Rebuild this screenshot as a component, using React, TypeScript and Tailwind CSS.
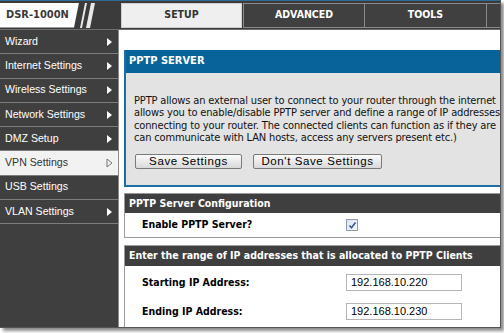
import React from "react";

const tahoma = "font-['DejaVu_Sans_Condensed','DejaVu_Sans',sans-serif]";
const arial = "font-['Liberation_Sans',Arial,sans-serif]";

const menu = [
  "Wizard",
  "Internet Settings",
  "Wireless Settings",
  "Network Settings",
  "DMZ Setup",
  "VPN Settings",
  "USB Settings",
  "VLAN Settings",
];

function Arrow({ active }: { active?: boolean }) {
  if (active) {
    return (
      <svg width="7" height="10" viewBox="0 0 7 10">
        <path d="M1 1 L6 5 L1 9 Z" fill="none" stroke="#777" strokeWidth="1" />
      </svg>
    );
  }
  return (
    <svg width="7" height="10" viewBox="0 0 7 10">
      <path d="M1 1 L6 5 L1 9 Z" fill="#fff" />
    </svg>
  );
}

function Sidebar() {
  return (
    <div className="w-[119px] shrink-0 bg-[#3f3f3f] border-r border-[#8c8c8c] flex flex-col">
      {menu.map((item) => {
        const active = item === "VPN Settings";
        const noArrow = item === "USB Settings";
        return (
          <div
            key={item}
            className={`h-[24.3px] shrink-0 flex items-center justify-between pl-[5px] pr-[5px] border-b border-[#7d7d7d] text-[10.6px] ${arial} ${
              active ? "bg-[#f2f2f2] text-[#333]" : "text-white"
            }`}
          >
            <span>{item}</span>
            {!noArrow && <Arrow active={active} />}
          </div>
        );
      })}
    </div>
  );
}

function TopBar() {
  return (
    <div className="h-[30px] shrink-0 bg-[#3b3b3b] border-t border-[#2d6a96] border-b border-b-[#6e6e6e] flex items-center">
      <div className="w-[121px] shrink-0 flex items-center">
        <div
          className={`w-[79px] h-[25px] bg-white [clip-path:polygon(0_0,79px_0,74px_100%,0_100%)] flex items-center pl-[6px] text-[11px] font-bold text-[#3a3a3a] ${tahoma}`}
        >
          DSR-1000N
        </div>
        <svg width="42" height="25" viewBox="0 0 42 25">
          <path d="M6 0 L8 0 L3 25 L1 25 Z" fill="#e8e8e8" />
          <path d="M12 0 L16 0 L11 25 L7 25 Z" fill="#e8e8e8" />
        </svg>
      </div>
      <div className={`flex text-[10.5px] font-bold ${tahoma}`}>
        <div className="w-[121px] h-[25px] bg-[#efefef] border border-[#cfcfcf] text-[#333] flex items-center justify-center">
          SETUP
        </div>
        <div className="w-[122px] h-[25px] ml-[1px] bg-[#404040] border border-[#8a8a8a] text-white flex items-center justify-center">
          ADVANCED
        </div>
        <div className="w-[122px] h-[25px] bg-[#404040] border border-[#8a8a8a] border-l-0 text-white flex items-center justify-center">
          TOOLS
        </div>
        <div className="w-[40px] h-[25px] bg-[#404040] border border-[#8a8a8a] border-l-0" />
      </div>
    </div>
  );
}

function Button({ label, w }: { label: string; w: string }) {
  return (
    <button
      className={`${w} h-[15px] rounded-[2px] border border-[#7a7a7a] bg-gradient-to-b from-[#fbfbfb] to-[#d9d9d9] text-[11.5px] tracking-[0.6px] text-black leading-none ${arial}`}
    >
      {label}
    </button>
  );
}

function Checkbox() {
  return (
    <span className="w-[12px] h-[12px] border border-[#8b9bb5] bg-gradient-to-br from-[#dfe4ee] to-[#f7f8fb] flex items-center justify-center">
      <svg width="9" height="9" viewBox="0 0 9 9">
        <path d="M1.5 4.5 L3.5 6.8 L7.5 1.5" fill="none" stroke="#3b57a8" strokeWidth="1.6" />
      </svg>
    </span>
  );
}

function Main() {
  return (
    <div className={`flex-1 min-w-0 overflow-hidden bg-white pl-[5px] pt-[20px] ${tahoma}`}>
      <div className="w-[420px] border-2 border-[#1d6ea6] border-t-0">
        <div className="h-[23px] bg-[#08639b] text-white font-bold text-[11px] flex items-center pl-[3px]">
          PPTP SERVER
        </div>
        <div className="bg-[#e3e3e3] h-[112px] pt-[22px] pl-[8px]">
          <div className="text-[11px] tracking-[-0.15px] leading-[12.3px] text-[#111] whitespace-nowrap">
            <div>PPTP allows an external user to connect to your router through the internet</div>
            <div>allows you to enable/disable PPTP server and define a range of IP addresses</div>
            <div>connecting to your router. The connected clients can function as if they are</div>
            <div>can communicate with LAN hosts, access any servers present etc.)</div>
          </div>
          <div className="flex gap-[11px] mt-[10px] ml-[1px]">
            <Button label="Save Settings" w="w-[107px]" />
            <Button label="Don't Save Settings" w="w-[129px]" />
          </div>
        </div>
      </div>

      <div className="w-[420px] mt-[6px] border border-[#9a9a9a]">
        <div className="h-[19px] bg-[#3f3f3f] text-white font-bold text-[10.5px] flex items-center pl-[4px]">
          PPTP Server Configuration
        </div>
        <div className="h-[24px] bg-white flex items-center pl-[17px]">
          <span className="w-[204px] font-bold text-[10.5px] text-black">Enable PPTP Server?</span>
          <Checkbox />
        </div>
      </div>

      <div className="w-[420px] mt-[7px] border border-[#9a9a9a]">
        <div className="h-[20px] bg-[#3f3f3f] text-white font-bold text-[10.5px] flex items-center pl-[4px] whitespace-nowrap">
          Enter the range of IP addresses that is allocated to PPTP Clients
        </div>
        <div className="bg-white pt-[8px] pb-[7px] flex flex-col gap-[12px] pl-[17px]">
          {[
            ["Starting IP Address:", "192.168.10.220"],
            ["Ending IP Address:", "192.168.10.230"],
          ].map(([label, value]) => (
            <div key={label} className="flex items-center">
              <span className="w-[204px] font-bold text-[10.5px] text-black">{label}</span>
              <span
                className={`w-[116px] h-[17px] border border-[#b5b5b5] bg-white flex items-center pl-[4px] text-[11px] text-black ${arial}`}
              >
                {value}
              </span>
            </div>
          ))}
        </div>
      </div>
    </div>
  );
}

export default function App() {
  return (
    <div className="w-[504px] h-[333px] bg-white">
      <div className="w-[501px] h-[328px] overflow-hidden flex flex-col border-r border-b border-[#555] shadow-[3px_3px_3px_rgba(0,0,0,0.45)]">
        <TopBar />
        <div className="flex flex-1 min-h-0">
          <Sidebar />
          <Main />
        </div>
      </div>
    </div>
  );
}
